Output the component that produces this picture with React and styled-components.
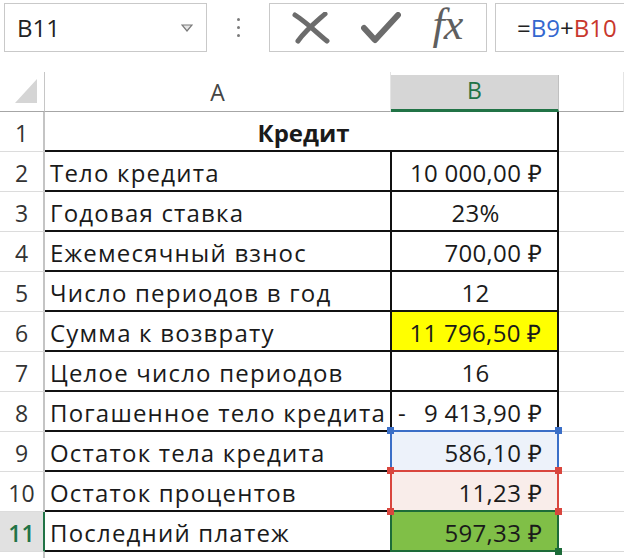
import React from 'react';
import styled, { createGlobalStyle } from 'styled-components';

const GlobalStyle = createGlobalStyle`
  html, body {
    margin: 0;
    padding: 0;
    background: #ffffff;
    overflow: hidden;
  }
  body {
    font-family: "Open Sans", "Liberation Sans", sans-serif;
    color: #1a1a1a;
  }
`;

const Page = styled.div`
  width: 624px;
  height: 558px;
  overflow: hidden;
  background: #fff;
`;

const Toolbar = styled.div`
  display: flex;
  align-items: flex-start;
  height: 72px;
  padding: 3px 0 0 4px;
  box-sizing: border-box;
`;

const NameBox = styled.div`
  width: 203px;
  height: 49px;
  box-sizing: border-box;
  border: 1px solid #c9c9c9;
  display: flex;
  align-items: center;
  justify-content: space-between;
  padding: 0 13px 0 12px;
  font-size: 24px;
  color: #222;
`;

const Dots = styled.div`
  width: 62px;
  height: 49px;
  display: flex;
  flex-direction: column;
  align-items: center;
  justify-content: center;
  gap: 5px;
`;

const Dot = styled.span`
  width: 3px;
  height: 3px;
  border-radius: 50%;
  background: #7a7a7a;
`;

const ButtonBox = styled.div`
  width: 218px;
  height: 49px;
  box-sizing: border-box;
  border: 1px solid #c9c9c9;
  display: flex;
  align-items: center;
  justify-content: space-around;
  padding: 0 8px 0 6px;
`;

const Fx = styled.span`
  font-family: "Liberation Serif", "DejaVu Serif", serif;
  font-style: italic;
  font-size: 44px;
  line-height: 1;
  color: #5f5f5f;
  letter-spacing: -1px;
  margin-top: -6px;
`;

const FormulaBox = styled.div`
  flex: 1;
  margin-left: 8px;
  height: 49px;
  box-sizing: border-box;
  border: 1px solid #c9c9c9;
  border-right: none;
  display: flex;
  align-items: center;
  padding-left: 21px;
  font-size: 24px;
  color: #222;
`;

const Ref = styled.span`
  color: ${p => p.$c};
`;

const Sheet = styled.div`
  display: flex;
  flex-direction: column;
`;

const Row = styled.div`
  display: flex;
  height: ${p => p.$h || 40}px;
`;

const Corner = styled.div`
  width: 45px;
  box-sizing: border-box;
  border-right: 1px solid #c6c6c6;
  border-bottom: 1px solid #a6a6a6;
  display: flex;
  align-items: flex-end;
  justify-content: flex-end;
  padding: 0 7px 8px 0;
`;

const Triangle = styled.div`
  width: 0;
  height: 0;
  border-left: 22px solid transparent;
  border-bottom: 24px solid #d5d5d5;
`;

const ColHead = styled.div`
  width: ${p => p.$w}px;
  flex: ${p => (p.$w ? 'none' : 1)};
  box-sizing: border-box;
  display: flex;
  align-items: flex-end;
  justify-content: center;
  padding-bottom: 3px;
  font-size: 23px;
  color: ${p => (p.$active ? '#217346' : '#444')};
  background: ${p => (p.$active ? '#d6d6d6' : '#fff')};
  margin-top: ${p => (p.$active ? 3 : 0)}px;
  border-bottom: ${p => (p.$active ? '3px solid #217346' : '1px solid #a6a6a6')};
  border-right: 1px solid ${p => (p.$active ? '#c0c0c0' : '#e4e4e4')};
`;

const RowHead = styled.div`
  width: 45px;
  flex: none;
  box-sizing: border-box;
  display: flex;
  align-items: center;
  justify-content: center;
  font-size: 23px;
  padding-top: 2px;
  color: ${p => (p.$active ? '#217346' : '#333')};
  font-weight: ${p => (p.$active ? 600 : 400)};
  background: ${p => (p.$active ? '#e1e1e1' : '#fff')};
  border-right: ${p => (p.$active ? '2px solid #217346' : '2px solid #c4c4c4')};
  border-bottom: 1px solid #dcdcdc;
`;

const LabelCell = styled.div`
  width: ${p => (p.$merged ? 514 : 345)}px;
  flex: none;
  box-sizing: border-box;
  border-bottom: 2px solid #111;
  border-right: ${p => (p.$merged ? '2px solid #111' : 'none')};
  display: flex;
  align-items: center;
  justify-content: ${p => (p.$merged ? 'center' : 'flex-start')};
  padding: 3px 0 0 5px;
  font-size: 24px;
  letter-spacing: ${p => (p.$merged ? 0 : 1.2)}px;
  font-weight: ${p => (p.$merged ? 700 : 400)};
  white-space: nowrap;
  overflow: visible;
  position: relative;
  z-index: 1;
`;

const fills = {
  plain: '#fff',
  yellow: '#ffff00',
  blue: '#edf2fa',
  red: '#f9edea',
  green: '#80bf47',
};

const ValueCell = styled.div`
  width: 169px;
  flex: none;
  position: relative;
  box-sizing: border-box;
  background: ${p => fills[p.$fill || 'plain']};
  border-left: 2px solid ${p => p.$side || '#111'};
  border-right: 2px solid ${p => p.$side || '#111'};
  border-bottom: 2px solid ${p => p.$bottom || '#111'};
  display: flex;
  align-items: center;
  justify-content: ${p => (p.$align === 'center' ? 'center' : p.$align === 'split' ? 'space-between' : 'flex-end')};
  padding: ${p => (p.$align === 'center' ? '3px 0 0 2px' : '3px 15px 0 6px')};
  font-size: 24px;
  letter-spacing: 0.3px;
  white-space: nowrap;
`;

const EmptyCell = styled.div`
  flex: 1;
  box-sizing: border-box;
  border-bottom: 1px solid #d9d9d9;
`;

const Handle = styled.span`
  position: absolute;
  width: 7px;
  height: 7px;
  background: ${p => p.$c};
  ${p => (p.$top ? 'top: -5px;' : 'bottom: -5px;')}
  ${p => (p.$left ? 'left: -5px;' : 'right: -5px;')}
  z-index: 2;
`;

const BLUE = '#3b6fc7';
const RED = '#d9463e';
const GREEN = '#1d6b39';

const rows = [
  { n: 2, label: 'Тело кредита', value: '10 000,00 ₽' },
  { n: 3, label: 'Годовая ставка', value: '23%', align: 'center' },
  { n: 4, label: 'Ежемесячный взнос', value: '700,00 ₽' },
  { n: 5, label: 'Число периодов в год', value: '12', align: 'center' },
  { n: 6, label: 'Сумма к возврату', value: '11 796,50 ₽', align: 'center', fill: 'yellow' },
  { n: 7, label: 'Целое число периодов', value: '16', align: 'center' },
  { n: 8, label: 'Погашенное тело кредита', value: '9 413,90 ₽', align: 'split', bottom: BLUE },
  { n: 9, label: 'Остаток тела кредита', value: '586,10 ₽', fill: 'blue', side: BLUE, bottom: RED, range: BLUE },
  { n: 10, label: 'Остаток процентов', value: '11,23 ₽', fill: 'red', side: RED, bottom: GREEN, range: RED },
  { n: 11, label: 'Последний платеж', value: '597,33 ₽', fill: 'green', side: GREEN, bottom: GREEN, active: true },
];

function XIcon() {
  return (
    <svg width="38" height="32" viewBox="0 0 38 32">
      <path d="M3 3 C 14 10, 24 20, 35 29" stroke="#6c6c6c" strokeWidth="5" strokeLinecap="round" fill="none" />
      <path d="M33 2 C 24 10, 14 18, 6 29" stroke="#6c6c6c" strokeWidth="5" strokeLinecap="round" fill="none" />
    </svg>
  );
}

function CheckIcon() {
  return (
    <svg width="40" height="32" viewBox="0 0 40 32">
      <path d="M3 16 L14 28 L37 3" stroke="#6c6c6c" strokeWidth="6" strokeLinecap="round" strokeLinejoin="round" fill="none" />
    </svg>
  );
}

function DropArrow() {
  return (
    <svg width="12" height="8" viewBox="0 0 12 8">
      <path d="M1 1 L11 1 L6 7 Z" fill="#e6e6e6" stroke="#7a7a7a" strokeWidth="1.2" />
    </svg>
  );
}

export default function App() {
  return (
    <Page>
      <GlobalStyle />
      <Toolbar>
        <NameBox>
          <span>B11</span>
          <DropArrow />
        </NameBox>
        <Dots>
          <Dot />
          <Dot />
          <Dot />
        </Dots>
        <ButtonBox>
          <XIcon />
          <CheckIcon />
          <Fx>fx</Fx>
        </ButtonBox>
        <FormulaBox>
          =<Ref $c="#3467cf">B9</Ref>+<Ref $c="#c8372d">B10</Ref>
        </FormulaBox>
      </Toolbar>
      <Sheet>
        <Row>
          <Corner>
            <Triangle />
          </Corner>
          <ColHead $w={346}>A</ColHead>
          <ColHead $w={168} $active>B</ColHead>
          <ColHead />
        </Row>
        <Row>
          <RowHead>1</RowHead>
          <LabelCell $merged>Кредит</LabelCell>
          <EmptyCell />
        </Row>
        {rows.map(r => (
          <Row key={r.n}>
            <RowHead $active={r.active}>{r.n}</RowHead>
            <LabelCell>{r.label}</LabelCell>
            <ValueCell $fill={r.fill} $side={r.side} $bottom={r.bottom} $align={r.align}>
              {r.align === 'split' && <span>-</span>}
              <span>{r.value}</span>
              {r.range && (
                <>
                  <Handle $c={r.range} $top $left />
                  <Handle $c={r.range} $top />
                </>
              )}
              {r.n === 10 && (
                <>
                  <Handle $c={RED} $left />
                  <Handle $c={RED} />
                </>
              )}
              {r.active && <Handle $c={GREEN} />}
            </ValueCell>
            <EmptyCell />
          </Row>
        ))}
        <Row $h={10}>
          <RowHead />
          <EmptyCell />
        </Row>
      </Sheet>
    </Page>
  );
}
